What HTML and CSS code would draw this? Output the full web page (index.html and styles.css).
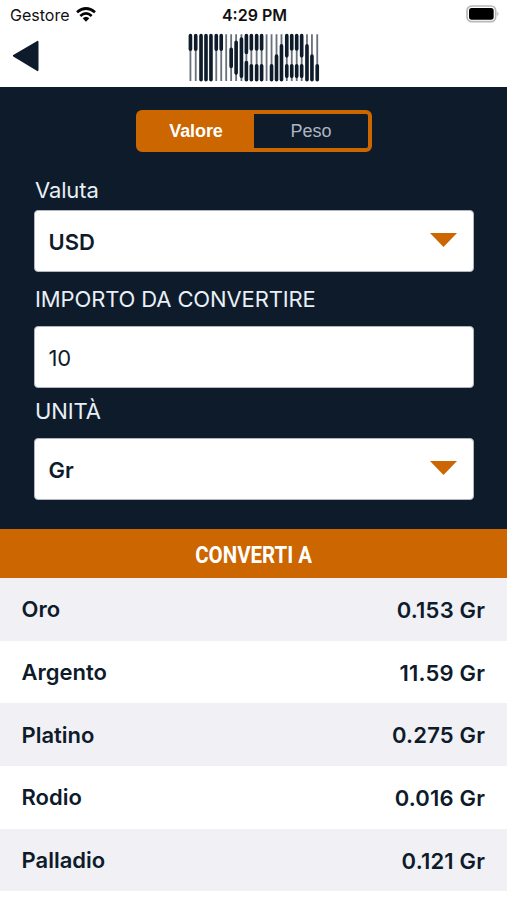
FILE: index.html
```
<!DOCTYPE html>
<html lang="it">
<head>
<meta charset="utf-8">
<title>TCA</title>
<link rel="stylesheet" href="styles.css">
</head>
<body>
<header class="top">
  <div class="status">
    <div class="carrier"><span>Gestore</span>
      <svg class="wifi" viewBox="0 0 60 45" width="20" height="15"><g fill="none" stroke="#050505" stroke-width="8"><path d="M3 16Q30-7 57 16"/><path d="M13 27Q30 11 47 27"/></g><path d="M20 34Q30 25 40 34L30 44Z" fill="#050505"/></svg>
    </div>
    <time class="time">4:29 PM</time>
    <svg class="battery" viewBox="0 0 102 54" width="34" height="18"><rect x="3" y="3" width="86" height="47" rx="14" fill="#fff" stroke="#b8b8b8" stroke-width="5"/><rect x="9" y="9" width="74" height="35" rx="8" fill="#000"/><path d="M94 20Q101 26 94 33Z" fill="#b5b5b5"/></svg>
  </div>
  <nav class="bar">
    <svg class="back" viewBox="0 0 84 96" width="28" height="32"><path d="M5 47L77 5V91Z" fill="#0e1b2a" stroke="#0e1b2a" stroke-width="5" stroke-linejoin="round"/></svg>
    <svg class="logo" viewBox="24 14 396 148" width="132" height="49" role="img" aria-label="TCA">
      <path class="thin" d="M30 18V159M46 18V159M108 18V159M123 18V159M138 18V159M153 18V159M168 18V159M184 18V159M199 18V159M214 18V159M230 18V159M245 18V159M260 18V159M275 18V159M290 18V159M305 18V159M321 18V159M336 18V159M351 18V159M366 18V159M382 18V159M397 18V159M413 18V159"/>
      <path class="thick" d="M30 22V63M46 22V63M62 22V155M77 22V155M92 22V155M108 22V63M123 22V63M153 63V115M168 42V135M184 32V145M199 22V73M199 103V155M214 22V62M214 113V155M230 22V62M230 113V155M245 22V62M245 113V155M275 113V155M290 84V155M305 53V155M321 22V83M321 113V145M336 22V62M336 113V145M351 22V62M351 113V145M366 22V83M366 113V145M382 53V155M397 84V155M413 113V155"/>
    </svg>
  </nav>
</header>
<main>
  <section class="form">
    <div class="segments"><span class="segment active">Valore</span><span class="segment">Peso</span></div>
    <label class="label valuta">Valuta</label>
    <div class="field strong"><span>USD</span><svg class="caret" viewBox="0 0 27 14"><path d="M0 0H27L13.500 14Z"/></svg></div>
    <label class="label importo">IMPORTO DA CONVERTIRE</label>
    <div class="field amount"><span>10</span></div>
    <label class="label unita">UNITÀ</label>
    <div class="field strong"><span>Gr</span><svg class="caret" viewBox="0 0 27 14"><path d="M0 0H27L13.500 14Z"/></svg></div>
  </section>
  <h1 class="heading"><span>CONVERTI A</span></h1>
  <section class="results">
    <div class="row"><span>Oro</span><span class="num">0.153 Gr</span></div>
    <div class="row"><span>Argento</span><span class="num">11.59 Gr</span></div>
    <div class="row"><span>Platino</span><span class="num">0.275 Gr</span></div>
    <div class="row"><span>Rodio</span><span class="num">0.016 Gr</span></div>
    <div class="row"><span>Palladio</span><span class="num">0.121 Gr</span></div>
  </section>
</main>
</body>
</html>
```
FILE: styles.css
```
* { box-sizing: border-box; }
body { margin: 0; background: #fff; color: #0e1b2a; font-family: Inter, sans-serif; }
svg { display: block; flex: none; }
.top { height: 87px; }
.status { height: 30px; display: grid; grid-template-columns: 1fr auto 1fr; align-items: center; padding: 0 7px 0 10px; color: #111; font-size: 16px; }
.carrier { display: flex; align-items: center; gap: 7px; }
.wifi { margin-top: -2px; }
.time { font-weight: 600; padding-right: 1px; }
.battery { justify-self: end; margin-top: -2px; }
.bar { height: 57px; display: flex; align-items: flex-start; }
.back { margin: 10px 0 0 12px; }
.logo { margin: 3px 0 0 148px; }
.logo path { fill: none; stroke-linecap: butt; }
.logo .thick { stroke-linecap: round; }
.thin { stroke: #68717b; stroke-width: 5.500; }
.thick { stroke: #0e1b2a; stroke-width: 11; }
.form { height: 442px; padding: 23px 34px 0; background: #0e1b2a; }
.segments { width: 236px; height: 42px; margin: 0 auto 0 102px; display: flex; border: 4px solid #cb6600; border-radius: 6px; background: #cb6600; font: 18px/35px "Liberation Sans", sans-serif; }
.segment { width: 114px; border-radius: 0 2px 2px 0; background: #0e1b2a; color: #aeb5c2; text-align: center; }
.segment.active { padding-right: 2px; background: #cb6600; color: #fff; font-weight: 700; letter-spacing: -.1px; }
.label { display: block; padding-left: 1px; font-size: 22px; line-height: 30px; letter-spacing: -.13px; color: #e8eff7; white-space: nowrap; }
.valuta { height: 58px; padding-top: 23px; }
.importo { height: 54px; padding-top: 12px; }
.unita { height: 50px; padding-top: 8px; }
.field { width: 440px; height: 62px; display: flex; align-items: center; justify-content: space-between; padding: 1px 16px 0 13.500px; border: 1px solid #b0b6be; border-radius: 4px; background: #fff; font-size: 22px; }
.amount { letter-spacing: -.3px; }
.strong { font-weight: 600; }
.caret { width: 27px; height: 14px; margin-top: -4px; fill: #cb6600; }
.heading { height: 49px; margin: 0; display: flex; align-items: center; justify-content: center; background: #cb6600; color: #fff; font: 700 23px/49px Roboto, sans-serif; }
.heading span { padding-top: 3px; transform: scaleX(.89); }
.row { height: 62.700px; display: flex; justify-content: space-between; align-items: center; padding: 0 22px 0 21.500px; font-size: 22px; font-weight: 600; }
.num { padding-top: 1px; letter-spacing: .2px; margin-right: -.200px; }
.row:nth-child(odd) { background: #f0f0f5; }
```
